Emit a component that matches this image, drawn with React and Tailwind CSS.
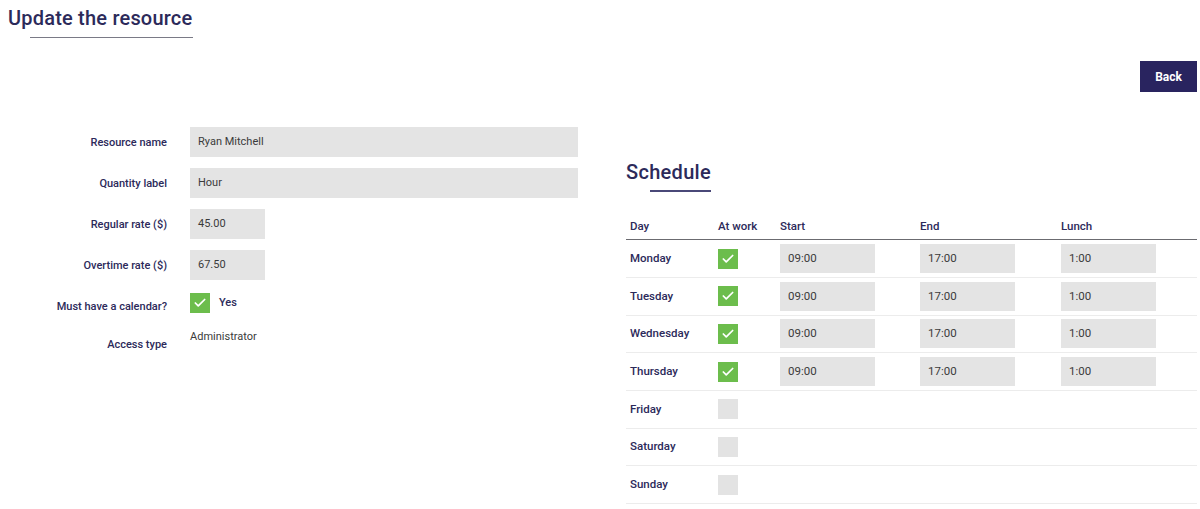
import { Check } from "lucide-react";

const fields = [
  { label: "Resource name", value: "Ryan Mitchell", width: "w-[388px]" },
  { label: "Quantity label", value: "Hour", width: "w-[388px]" },
  { label: "Regular rate ($)", value: "45.00", width: "w-[75px]" },
  { label: "Overtime rate ($)", value: "67.50", width: "w-[75px]" },
];

const days = [
  { day: "Monday", work: true },
  { day: "Tuesday", work: true },
  { day: "Wednesday", work: true },
  { day: "Thursday", work: true },
  { day: "Friday", work: false },
  { day: "Saturday", work: false },
  { day: "Sunday", work: false },
];

const Box = ({ checked }) =>
  checked ? (
    <div className="w-5 h-5 bg-[#6cbd4c] flex items-center justify-center">
      <Check size={14} strokeWidth={3} className="text-white" />
    </div>
  ) : (
    <div className="w-5 h-5 bg-[#e3e3e3]" />
  );

const TimeBox = ({ value }) => (
  <div className="w-[95px] h-[29px] bg-[#e4e4e4] flex items-center pl-2 text-[11.5px] text-[#3b3b3b]">
    {value}
  </div>
);

const App = () => {
  return (
    <div className="w-[1200px] h-[509px] bg-white overflow-hidden font-['Roboto',sans-serif] text-[#2c2a5a]">
      <header className="pl-2 pt-[5px]">
        <h1 className="text-[20px] font-medium leading-[26px] tracking-[0.2px]">
          Update the resource
        </h1>
        <div className="ml-[22px] mt-[6px] w-[163px] h-px bg-[#7a7a86]" />
      </header>

      <div className="flex justify-end pr-[3px] mt-[23px]">
        <button className="w-[57px] h-[31px] bg-[#29245f] text-white text-[12px] font-bold">
          Back
        </button>
      </div>

      <div className="flex mt-[35px]">
        {/* resource details */}
        <div className="w-[626px] flex flex-col gap-[11px]">
          {fields.map((f) => (
            <div key={f.label} className="flex items-center gap-[23px]">
              <div className="w-[167px] text-right text-[11px] font-medium pt-[2px]">
                {f.label}
              </div>
              <div
                className={`${f.width} h-[30px] bg-[#e4e4e4] flex items-center pl-2 text-[11px] text-[#3b3b3b]`}
              >
                {f.value}
              </div>
            </div>
          ))}
          <div className="flex gap-[23px] h-[30px]">
            <div className="w-[167px] h-[30px] flex items-center justify-end text-[11px] font-medium pt-[3px]">
              Must have a calendar?
            </div>
            <div className="flex items-start gap-[9px] pt-[2px]">
              <Box checked />
              <span className="text-[11px] font-medium leading-5">Yes</span>
            </div>
          </div>
          <div className="flex gap-[23px]">
            <div className="w-[167px] h-[26px] flex items-center justify-end text-[11px] font-medium pt-[1px]">
              Access type
            </div>
            <div className="text-[11px] text-[#3b3b3b] leading-[15px] -mt-[3px]">
              Administrator
            </div>
          </div>
        </div>

        {/* weekly schedule */}
        <div className="w-[571px] pt-[32px]">
          <h2 className="text-[20px] font-medium leading-[26px] tracking-[0.3px]">
            Schedule
          </h2>
          <div className="ml-[24px] mt-[5px] w-[61px] h-[2px] bg-[#4a4878]" />

          <div className="mt-[26px]">
            <div className="grid grid-cols-[88px_62px_140px_141px_136px] text-[11.5px] font-medium border-b border-[#6b6b70] pb-[4px] pl-1">
              <div>Day</div>
              <div>At work</div>
              <div>Start</div>
              <div>End</div>
              <div>Lunch</div>
            </div>
            {days.map((d) => (
              <div
                key={d.day}
                className="grid grid-cols-[88px_62px_140px_141px_136px] items-center h-[37.7px] border-b border-[#ececec] pl-1 text-[11.5px]"
              >
                <div className="font-medium">{d.day}</div>
                <div>
                  <Box checked={d.work} />
                </div>
                {d.work ? (
                  <>
                    <TimeBox value="09:00" />
                    <TimeBox value="17:00" />
                    <TimeBox value="1:00" />
                  </>
                ) : null}
              </div>
            ))}
          </div>
        </div>
      </div>
    </div>
  );
};

export default App;
